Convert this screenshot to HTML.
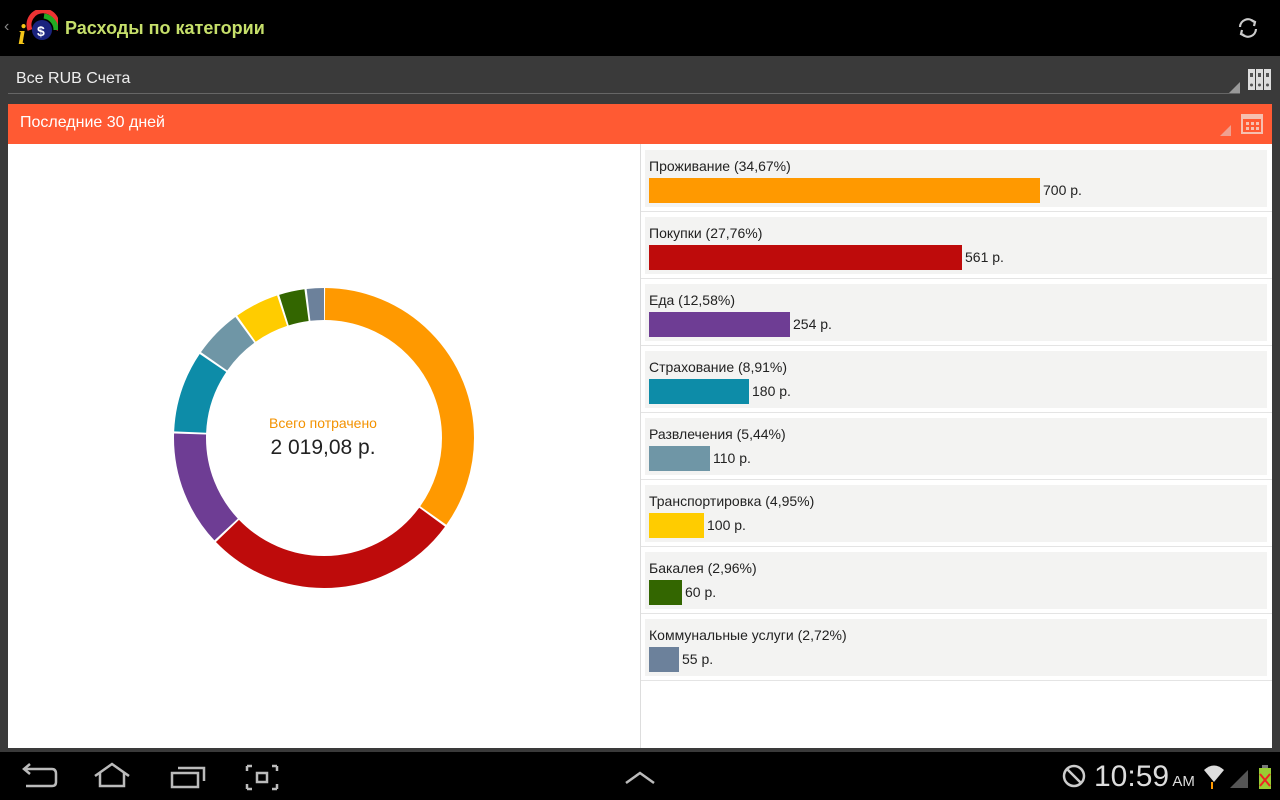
<!DOCTYPE html>
<html><head><meta charset="utf-8"><style>
*{margin:0;padding:0;box-sizing:border-box}
body{width:1280px;height:800px;background:#3a3a3a;font-family:"Liberation Sans","Noto Sans CJK SC",sans-serif;position:relative;overflow:hidden}
.abs{position:absolute}
.row{position:absolute;left:645px;width:622px;height:57px;background:#f3f3f2}
.sep{position:absolute;left:641px;width:631px;height:1px;background:#e4e4e4}
.lbl{position:absolute;left:4px;top:8px;font-size:14px;color:#222}
.bar{position:absolute;left:4px;top:28px;height:25px}
.val{position:absolute;top:32px;font-size:14px;color:#222}
</style></head><body>
<div class="abs" style="left:0;top:0;width:1280px;height:56px;background:#000"></div>
<div class="abs" style="left:4px;top:18px;color:#888;font-size:16px">‹</div>
<svg class="abs" style="left:16px;top:10px" width="42" height="38" viewBox="0 0 42 38">
<path d="M14 20 A14 14 0 1 1 40 20" fill="none" stroke="#e33" stroke-width="5"/>
<path d="M28 6 A14 14 0 0 1 40 20" fill="none" stroke="#2a2" stroke-width="5"/>
<circle cx="26" cy="20" r="10" fill="#1a237e"/>
<text x="21" y="26" font-size="14" font-weight="bold" fill="#fff" font-family="Liberation Sans">$</text>
<text x="2" y="34" font-size="28" font-style="italic" font-weight="bold" fill="#f5c518" font-family="Liberation Serif">i</text>
</svg>
<div class="abs" style="left:65px;top:18px;color:#c6df6a;font-size:18px;font-weight:bold">Расходы по категории</div>
<svg class="abs" style="left:1236px;top:16px" width="24" height="24" viewBox="0 0 24 24" fill="none" stroke="#ccc" stroke-width="2.2"><path d="M4 11 A8 8 0 0 1 18 6"/><path d="M15 4 L19 6 L18 10"/><path d="M20 13 A8 8 0 0 1 6 18"/><path d="M9 20 L5 18 L6 14"/></svg>
<div class="abs" style="left:16px;top:70px;color:#eee;font-size:16px">Все RUB Счета</div>
<div class="abs" style="left:8px;top:93px;width:1232px;height:1px;background:#666"></div>
<div class="abs" style="left:1229px;top:82px;width:0;height:0;border-left:11px solid transparent;border-bottom:11px solid #999"></div>
<svg class="abs" style="left:1247px;top:68px" width="26" height="24"><g fill="#ddd"><rect x="1" y="1" width="7" height="21"/><rect x="9" y="1" width="7" height="21"/><rect x="17" y="1" width="7" height="21"/></g><g fill="#555"><circle cx="4.5" cy="17" r="1.5"/><circle cx="12.5" cy="17" r="1.5"/><circle cx="20.5" cy="17" r="1.5"/><rect x="3" y="5" width="3" height="4"/><rect x="11" y="5" width="3" height="4"/><rect x="19" y="5" width="3" height="4"/></g></svg>
<div class="abs" style="left:8px;top:104px;width:1264px;height:40px;background:#ff5a33"></div>
<div class="abs" style="left:20px;top:114px;color:#fff;font-size:16px">Последние 30 дней</div>
<div class="abs" style="left:1220px;top:125px;width:0;height:0;border-left:11px solid transparent;border-bottom:11px solid #f0a090"></div>
<svg class="abs" style="left:1241px;top:112px" width="22" height="22"><rect x="1" y="3" width="20" height="18" fill="none" stroke="#f6c0b0" stroke-width="2"/><rect x="1" y="3" width="20" height="4" fill="#f6c0b0"/><g fill="#f6c0b0"><rect x="5" y="10" width="3" height="3"/><rect x="10" y="10" width="3" height="3"/><rect x="15" y="10" width="3" height="3"/><rect x="5" y="15" width="3" height="3"/><rect x="10" y="15" width="3" height="3"/><rect x="15" y="15" width="3" height="3"/></g></svg>
<div class="abs" style="left:8px;top:144px;width:1264px;height:604px;background:#fff"></div>
<div class="abs" style="left:640px;top:144px;width:1px;height:604px;background:#ddd"></div>
<svg class="abs" style="left:173px;top:287px" width="302" height="302" viewBox="-151 -151 302 302">
<g transform="rotate(-90)" fill="none" stroke-width="32">
<circle r="134" stroke="#ff9900" stroke-dasharray="292.07 2000" stroke-dashoffset="-1"/>
<circle r="134" stroke="#be0b0b" stroke-dasharray="233.46 2000" stroke-dashoffset="-295.07"/>
<circle r="134" stroke="#6e3d94" stroke-dasharray="104.70 2000" stroke-dashoffset="-530.53"/>
<circle r="134" stroke="#0d8ca8" stroke-dasharray="73.57 2000" stroke-dashoffset="-637.23"/>
<circle r="134" stroke="#6f96a6" stroke-dasharray="44.14 2000" stroke-dashoffset="-712.80"/>
<circle r="134" stroke="#ffcc00" stroke-dasharray="39.99 2000" stroke-dashoffset="-758.94"/>
<circle r="134" stroke="#336600" stroke-dasharray="23.11 2000" stroke-dashoffset="-800.93"/>
<circle r="134" stroke="#6c819b" stroke-dasharray="21.07 2000" stroke-dashoffset="-826.04"/>
</g></svg>
<div class="abs" style="left:223px;top:415px;width:200px;text-align:center;color:#f39200;font-size:14px">Всего потрачено</div>
<div class="abs" style="left:223px;top:436px;width:200px;text-align:center;color:#222;font-size:21px">2 019,08 р.</div>

<div class="row" style="top:150px"><div class="lbl">Проживание (34,67%)</div><div class="bar" style="width:391px;background:#ff9900"></div><div class="val" style="left:398px">700 р.</div></div>
<div class="sep" style="top:211px"></div>
<div class="row" style="top:217px"><div class="lbl">Покупки (27,76%)</div><div class="bar" style="width:313px;background:#be0b0b"></div><div class="val" style="left:320px">561 р.</div></div>
<div class="sep" style="top:278px"></div>
<div class="row" style="top:284px"><div class="lbl">Еда (12,58%)</div><div class="bar" style="width:141px;background:#6e3d94"></div><div class="val" style="left:148px">254 р.</div></div>
<div class="sep" style="top:345px"></div>
<div class="row" style="top:351px"><div class="lbl">Страхование (8,91%)</div><div class="bar" style="width:100px;background:#0d8ca8"></div><div class="val" style="left:107px">180 р.</div></div>
<div class="sep" style="top:412px"></div>
<div class="row" style="top:418px"><div class="lbl">Развлечения (5,44%)</div><div class="bar" style="width:61px;background:#6f96a6"></div><div class="val" style="left:68px">110 р.</div></div>
<div class="sep" style="top:479px"></div>
<div class="row" style="top:485px"><div class="lbl">Транспортировка (4,95%)</div><div class="bar" style="width:55px;background:#ffcc00"></div><div class="val" style="left:62px">100 р.</div></div>
<div class="sep" style="top:546px"></div>
<div class="row" style="top:552px"><div class="lbl">Бакалея (2,96%)</div><div class="bar" style="width:33px;background:#336600"></div><div class="val" style="left:40px">60 р.</div></div>
<div class="sep" style="top:613px"></div>
<div class="row" style="top:619px"><div class="lbl">Коммунальные услуги (2,72%)</div><div class="bar" style="width:30px;background:#6c819b"></div><div class="val" style="left:37px">55 р.</div></div>
<div class="sep" style="top:680px"></div>

<div class="abs" style="left:0;top:752px;width:1280px;height:48px;background:#000"></div>
<svg class="abs" style="left:0;top:752px" width="700" height="48" fill="none" stroke="#bbb" stroke-width="2.5">
<path d="M26 17 L52 17 Q56 17 56 22 L56 30 Q56 34 52 34 L26 34"/><path d="M30 12 L24 17 L30 22"/>
<path d="M95 24 L112 12 L129 24"/><path d="M100 21 L100 34 L124 34 L124 21"/>
<rect x="172" y="21" width="26" height="14"/><path d="M178 16 L204 16 L204 29"/>
<path d="M247 14 L247 19 M247 14 L252 14 M277 14 L272 14 M277 14 L277 19 M247 37 L247 32 M247 37 L252 37 M277 37 L272 37 M277 37 L277 32"/><rect x="257" y="21" width="10" height="9"/>
<path d="M626 31 L640 21 L654 31"/>
</svg>
<svg class="abs" style="left:1062px;top:764px" width="24" height="24" fill="none" stroke="#ccc" stroke-width="2.5"><circle cx="12" cy="12" r="10"/><path d="M5 5 L19 19"/></svg>
<div class="abs" style="left:1094px;top:760px;color:#ddd;font-size:30px">10:59<span style="font-size:15px"> AM</span></div>
<svg class="abs" style="left:1202px;top:762px" width="76" height="28"><path d="M2 8 Q12 -1 22 8 L12 20 Z" fill="#ddd"/><path d="M10 20 L10 27" stroke="#f90" stroke-width="2"/><path d="M28 26 L46 8 L46 26 Z" fill="#555"/><rect x="57" y="6" width="12" height="21" fill="#9c3"/><rect x="60" y="3" width="6" height="3" fill="#777"/><path d="M58 12 L68 24 M68 12 L58 24" stroke="#e22" stroke-width="2"/></svg>
</body></html>
